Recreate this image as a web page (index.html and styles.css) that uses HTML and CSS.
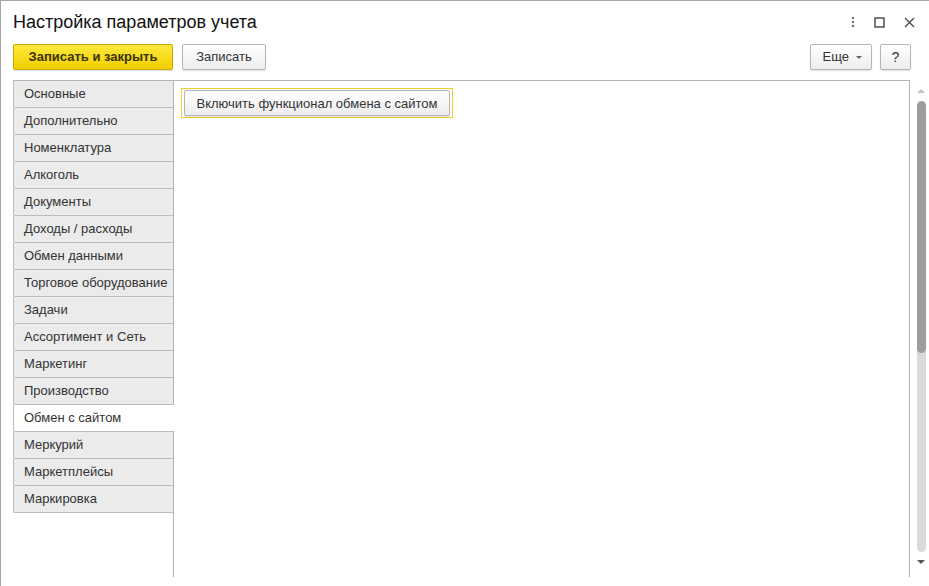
FILE: index.html
```html
<!DOCTYPE html>
<html lang="ru">
<head>
    <meta charset="UTF-8">
    <title>Настройка параметров учета</title>
    <link rel="stylesheet" href="styles.css">
</head>
<body>
    <div class="window">
        <div class="header">
            <h1>Настройка параметров учета</h1>
            <div class="window-controls">
                <span class="ctl ctl-more">
                    <svg width="4" height="12" viewBox="0 0 4 12"><circle cx="2" cy="2" r="1.3" fill="#777"/><circle cx="2" cy="6" r="1.3" fill="#777"/><circle cx="2" cy="10" r="1.3" fill="#777"/></svg>
                </span>
                <span class="ctl ctl-max">
                    <svg width="11" height="11" viewBox="0 0 11 11"><rect x="1" y="1" width="9" height="9" fill="none" stroke="#333" stroke-width="1.3"/></svg>
                </span>
                <span class="ctl ctl-close">
                    <svg width="11" height="11" viewBox="0 0 11 11"><path d="M1 1 L10 10 M10 1 L1 10" stroke="#444" stroke-width="1.3"/></svg>
                </span>
            </div>
        </div>

        <div class="toolbar">
            <button class="btn btn-primary">Записать и закрыть</button>
            <button class="btn btn-save">Записать</button>
            <div class="toolbar-right">
                <button class="btn btn-more">Еще <span class="caret"></span></button>
                <button class="btn btn-help">?</button>
            </div>
        </div>

        <div class="main">
            <div class="panel">
                <div class="tabs">
                    <div class="tab">Основные</div>
                    <div class="tab">Дополнительно</div>
                    <div class="tab">Номенклатура</div>
                    <div class="tab">Алкоголь</div>
                    <div class="tab">Документы</div>
                    <div class="tab">Доходы / расходы</div>
                    <div class="tab">Обмен данными</div>
                    <div class="tab">Торговое оборудование</div>
                    <div class="tab">Задачи</div>
                    <div class="tab">Ассортимент и Сеть</div>
                    <div class="tab">Маркетинг</div>
                    <div class="tab">Производство</div>
                    <div class="tab active">Обмен с сайтом</div>
                    <div class="tab">Меркурий</div>
                    <div class="tab">Маркетплейсы</div>
                    <div class="tab">Маркировка</div>
                </div>
                <div class="tab-content">
                    <div class="focus-frame">
                        <button class="btn btn-action">Включить функционал обмена с сайтом</button>
                    </div>
                </div>
            </div>

            <div class="scrollbar">
                <span class="arrow arrow-up"></span>
                <div class="track">
                    <div class="thumb"></div>
                </div>
                <span class="arrow arrow-down"></span>
            </div>
        </div>
    </div>
</body>
</html>
```

FILE: styles.css
```css
* {
    margin: 0;
    padding: 0;
    box-sizing: border-box;
}

body {
    font-family: 'Liberation Sans', Arial, sans-serif;
    font-size: 13px;
    color: #333;
    background: #fff;
}

.window {
    width: 929px;
    height: 586px;
    border-left: 1px solid #a6a6a6;
    border-top: 1px solid #a6a6a6;
    display: flex;
    flex-direction: column;
}

.header {
    display: flex;
    align-items: center;
    height: 42px;
    padding: 0 0 0 12px;
}

.header h1 {
    font-size: 18px;
    font-weight: normal;
    color: #111;
    flex: 1;
}

.window-controls {
    display: flex;
    align-items: center;
    margin-right: 14px;
}

.ctl {
    display: flex;
    align-items: center;
    justify-content: center;
}

.ctl-more {
    width: 10px;
    margin-right: 16px;
}

.ctl-max {
    width: 11px;
    margin-right: 19px;
}

.ctl-close {
    width: 11px;
}

.toolbar {
    display: flex;
    align-items: center;
    padding: 0 18px 0 12px;
    height: 27px;
}

.toolbar-right {
    margin-left: auto;
    display: flex;
    gap: 8px;
}

.btn {
    font-family: 'Liberation Sans', Arial, sans-serif;
    font-size: 13px;
    color: #333;
    height: 26px;
    border: 1px solid #b5b5b5;
    border-radius: 2px;
    background: linear-gradient(#ffffff, #ededed);
    box-shadow: 0 1px 1px rgba(0,0,0,0.12);
    padding: 0 12px;
    cursor: pointer;
}

.btn-primary {
    width: 160px;
    font-weight: bold;
    color: #3a3300;
    background: linear-gradient(#fde93c, #f1cf00);
    border-color: #c9a900;
    margin-right: 9px;
}

.btn-save {
    width: 84px;
}

.btn-more {
    width: 62px;
    padding: 0 0 0 2px;
}

.caret {
    display: inline-block;
    width: 0;
    height: 0;
    border-left: 3px solid transparent;
    border-right: 3px solid transparent;
    border-top: 3px solid #666;
    vertical-align: middle;
    margin-left: 3px;
}

.btn-help {
    width: 31px;
    padding: 0;
    font-size: 14px;
}

.main {
    flex: 1;
    display: flex;
    margin-top: 10px;
    padding-bottom: 9px;
}

.panel {
    flex: 1;
    display: flex;
    margin-left: 12px;
    border-top: 1px solid #b4b4b4;
    border-right: 1px solid #b4b4b4;
}

.tabs {
    width: 161px;
    display: flex;
    flex-direction: column;
    border-right: 1px solid #b4b4b4;
}

.tab {
    height: 27px;
    line-height: 26px;
    padding-left: 10px;
    background: #ebebeb;
    border-left: 1px solid #bdbdbd;
    border-bottom: 1px solid #bdbdbd;
    border-bottom-left-radius: 2px;
    color: #333;
    white-space: nowrap;
}

.tab.active {
    background: #fff;
    margin-right: -1px;
}

.tab-content {
    flex: 1;
    padding: 7px 0 0 7px;
}

.focus-frame {
    display: inline-block;
    border: 1px solid #f0cf27;
    padding: 1px 2px;
}

.btn-action {
    width: 266px;
    padding: 0;
}

.scrollbar {
    width: 10px;
    margin: 0 3px 0 6px;
    display: flex;
    flex-direction: column;
    align-items: center;
}

.arrow {
    width: 0;
    height: 0;
    border-left: 4px solid transparent;
    border-right: 4px solid transparent;
}

.arrow-up {
    border-bottom: 4px solid #c4c4c4;
    margin: 9px 0 8px;
}

.arrow-down {
    border-top: 4px solid #555;
    margin: 8px 0 0;
}

.track {
    width: 9px;
    height: 451px;
    background: #dadada;
    border-radius: 5px;
    overflow: hidden;
}

.thumb {
    height: 252px;
    background: #9d9d9d;
    border-radius: 5px;
}
```
